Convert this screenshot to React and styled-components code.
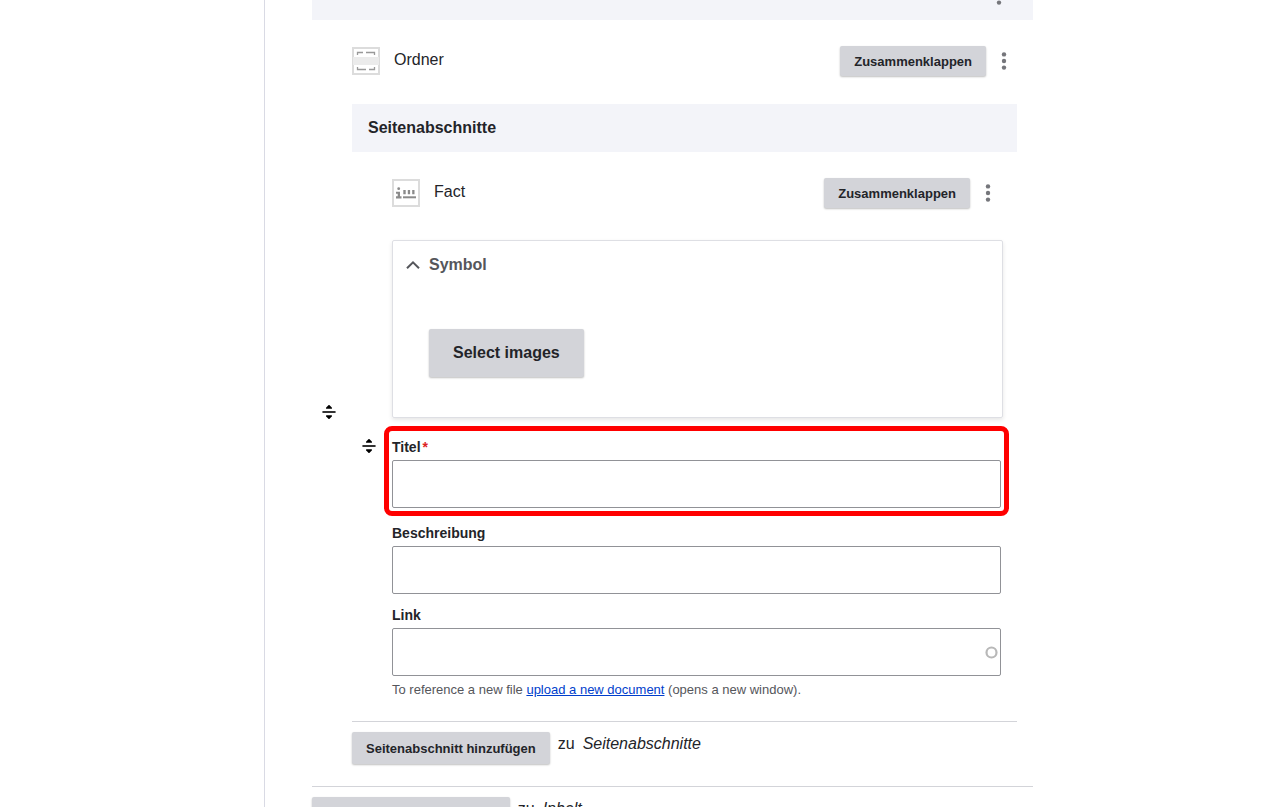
import { useId } from 'react';
import styled, { createGlobalStyle } from 'styled-components';

const GlobalStyle = createGlobalStyle`
  *, *::before, *::after {
    box-sizing: border-box;
  }

  body {
    margin: 0;
    background: #fff;
    color: #232429;
    font-family: 'Liberation Sans', Arial, sans-serif;
    font-size: 16px;
    line-height: 24px;
  }
`;

const Page = styled.div`
  display: grid;
  grid-template-columns: 264px minmax(0, 1fr);
  height: 100vh;
  overflow: hidden;
`;

const Main = styled.main`
  grid-column: 2;
  border-left: 1px solid #d9dae4;
  padding: 0 247px 0 47px;
`;

const TopBar = styled.div`
  display: flex;
  justify-content: flex-end;
  align-items: flex-end;
  height: 20px;
  padding: 0 21px 15px 0;
  overflow: hidden;
  background: #f3f4f9;
`;

const SectionTitle = styled.h4`
  margin: 0;
  padding: 12px 16px;
  background: #f3f4f9;
  font-size: 16px;
  line-height: 24px;
`;

const Row = styled.div`
  display: grid;
  grid-template-columns: 40px minmax(0, 1fr);
  padding-right: 16px;
  border-bottom: 1px solid #d3d4d9;
`;

const Handle = styled.a`
  display: flex;
  align-self: center;
  padding: 18px 0 0 10px;
  color: #000;
`;

const Paragraph = styled.div`
  padding-bottom: 22px;
`;

const ParagraphTop = styled.div`
  display: flex;
  align-items: center;
  gap: 14px;
  padding: 26px 0 ${props => props.$bottom} 0;
`;

const TypeLabel = styled.span`
  flex: 1;
  padding-bottom: 2px;
`;

const Actions = styled.div`
  display: flex;
  align-items: center;
  gap: 5px;
`;

const Button = styled.button`
  height: ${props => (props.$large ? '48px' : props.$medium ? '32px' : '30px')};
  padding: 0 ${props => (props.$large ? '24px' : '14px')};
  border: 0;
  border-radius: 2px;
  background: #d3d4d9;
  box-shadow: 0 1px 2px rgba(0, 0, 0, 0.25);
  color: #232429;
  font-family: inherit;
  font-size: ${props => (props.$large ? '16px' : '13px')};
  font-weight: 700;
  white-space: nowrap;
  cursor: pointer;
`;

const DotsButton = styled.button`
  display: flex;
  justify-content: center;
  width: 26px;
  padding: 0;
  border: 0;
  background: none;
  color: #75767b;
  cursor: pointer;
`;

const Details = styled.details`
  margin: 0 -2px 20px 0;
  border: 1px solid #dedfe4;
  border-radius: 2px;
  box-shadow: 0 2px 4px rgba(0, 0, 0, 0.1);
`;

const Summary = styled.summary`
  display: flex;
  align-items: center;
  gap: 8px;
  padding: 12px;
  color: #55565b;
  font-weight: 700;
  list-style: none;
  cursor: pointer;
`;

const DetailsBody = styled.div`
  display: flex;
  padding: 40px 36px;
`;

const Field = styled.div`
  position: relative;
  margin-bottom: ${props => props.$gap || '0'};
`;

const Highlight = styled.div`
  position: absolute;
  inset: -12px -8px -8px;
  border: 5px solid #ff0000;
  border-radius: 8px;
  pointer-events: none;
`;

const Label = styled.label`
  display: block;
  margin-bottom: 4px;
  font-size: 14px;
  font-weight: 700;
  line-height: 18px;
`;

const Required = styled.span`
  margin-left: 2px;
  color: #dc2323;
`;

const InputWrap = styled.div`
  display: grid;
  position: relative;
`;

const Input = styled.input`
  width: 100%;
  height: 48px;
  padding: 0 15px;
  border: 1px solid #919297;
  border-radius: 2px;
  background: #fff;
  color: inherit;
  font: inherit;
`;

const Throbber = styled.svg`
  position: absolute;
  top: 18px;
  right: 3px;
`;

const Description = styled.div`
  padding-top: 5px;
  color: #55565b;
  font-size: 13px;
  line-height: 18px;

  a {
    color: #003ecc;
  }
`;

const AddMore = styled.div`
  display: flex;
  align-items: flex-start;
  gap: 8px;
  padding-top: 10px;
`;

const DotsIcon = () => (
  <svg width="6" height="18" viewBox="0 0 6 18" fill="currentColor">
    <circle cx="3" cy="2.4" r="2.2" />
    <circle cx="3" cy="9" r="2.2" />
    <circle cx="3" cy="15.6" r="2.2" />
  </svg>
);

const DragIcon = () => (
  <svg width="14" height="14" viewBox="0 0 14 14" fill="currentColor">
    <path d="M6.4.3Q7-.2 7.6.3L9.8 2.4Q10.400 3.800 9.400 3.800H4.600Q3.600 3.800 4.200 2.400Z" />
    <rect x=".4" y="6" width="13.2" height="2" rx=".6" fill="#333" />
    <path d="M6.4 13.700Q7 14.200 7.600 13.700L9.800 11.600Q10.400 10.200 9.400 10.200H4.600Q3.600 10.200 4.200 11.600Z" />
  </svg>
);

const FolderIcon = () => (
  <svg width="28" height="28" viewBox="0 0 28 28" fill="none">
    <rect x="1" y="1" width="26" height="26" stroke="#dcdcdc" strokeWidth="2" />
    <rect x="1" y="10" width="26" height="8" fill="#ebebeb" />
    <path
      d="M5.500 8V5.500H11M14 5.500H22.500V8M5.500 20V22.500H14M17 22.500H22.500V20"
      stroke="#999"
      strokeWidth="1.300"
    />
  </svg>
);

const FactIcon = () => (
  <svg width="28" height="28" viewBox="0 0 28 28" fill="none">
    <rect x="1" y="1" width="26" height="26" stroke="#dcdcdc" strokeWidth="2" />
    <g fill="#8a8a8a">
      <circle cx="6.700" cy="9.700" r="1.400" />
      <path d="M4 12.800H8V17.300H9.500V19.400H4V17.300H5.700V14.800H4Z" />
      <path d="M11.300 11H13.700V15.300H11.300ZM15.800 11H18.100V15.300H15.800ZM20.200 11H22.500V15.300H20.200Z" />
      <path d="M11 17.300H24V19.300H11Z" />
    </g>
  </svg>
);

const Chevron = () => (
  <svg width="16" height="16" viewBox="0 0 16 16" fill="none">
    <path d="M2 11.300L8 5.300L14 11.300" stroke="#55565b" strokeWidth="2" />
  </svg>
);

const MoreActions = () => (
  <DotsButton type="button" aria-label="Aktionen">
    <DotsIcon />
  </DotsButton>
);

function ParagraphHeader({ icon, title, bottom }) {
  return (
    <ParagraphTop $bottom={bottom}>
      {icon}
      <TypeLabel>{title}</TypeLabel>
      <Actions>
        <Button type="button">Zusammenklappen</Button>
        <MoreActions />
      </Actions>
    </ParagraphTop>
  );
}

function TextField({ label, required, highlighted, loading, gap, children }) {
  const id = useId();

  return (
    <Field $gap={gap}>
      <Label htmlFor={id}>
        {label}
        {required ? <Required>*</Required> : null}
      </Label>
      <InputWrap>
        <Input id={id} type="text" required={required} />
        {loading ? (
          <Throbber width="13" height="13" viewBox="0 0 13 13" fill="none">
            <circle cx="6.500" cy="6.500" r="5" stroke="#b8b8b8" strokeWidth="2.200" />
          </Throbber>
        ) : null}
      </InputWrap>
      {children}
      {highlighted ? <Highlight /> : null}
    </Field>
  );
}

function AddParagraph({ target }) {
  return (
    <AddMore>
      <Button type="button" $medium>Seitenabschnitt hinzufügen</Button>
      <span>zu</span>
      <em>{target}</em>
    </AddMore>
  );
}

function FactRow() {
  return (
    <Row>
      <Handle href="#fact" aria-label="Verschieben"><DragIcon /></Handle>
      <Paragraph>
        <ParagraphHeader icon={<FactIcon />} title="Fact" bottom="32px" />
        <Details open>
          <Summary><Chevron />Symbol</Summary>
          <DetailsBody>
            <Button type="button" $large>Select images</Button>
          </DetailsBody>
        </Details>
        <TextField label="Titel" gap="16px" required highlighted />
        <TextField label="Beschreibung" gap="12px" />
        <TextField label="Link" loading>
          <Description>
            To reference a new file <a href="#upload">upload a new document</a> (opens a new window).
          </Description>
        </TextField>
      </Paragraph>
    </Row>
  );
}

function App() {
  return (
    <Page>
      <GlobalStyle />
      <Main>
        <TopBar><MoreActions /></TopBar>
        <Row>
          <Handle href="#ordner" aria-label="Verschieben"><DragIcon /></Handle>
          <Paragraph>
            <ParagraphHeader icon={<FolderIcon />} title="Ordner" bottom="28px" />
            <SectionTitle>Seitenabschnitte</SectionTitle>
            <FactRow />
            <AddParagraph target="Seitenabschnitte" />
          </Paragraph>
        </Row>
        <AddParagraph target="Inhalt" />
      </Main>
    </Page>
  );
}

export default App;
